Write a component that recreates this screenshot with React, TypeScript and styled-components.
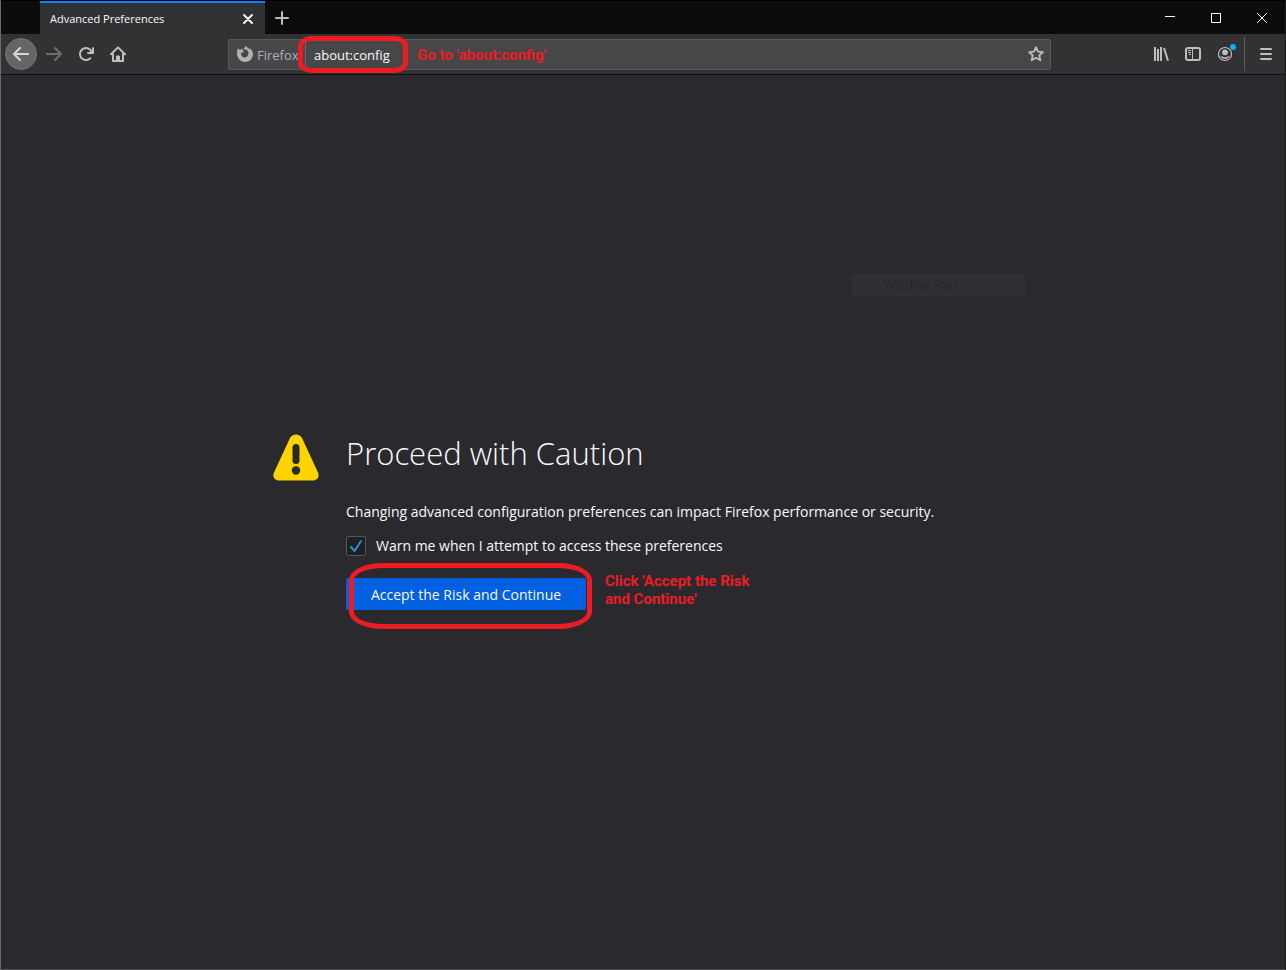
import React from 'react';
import styled, { createGlobalStyle } from 'styled-components';

const uiFont = '"Open Sans", "Noto Sans", sans-serif';

const GlobalStyle = createGlobalStyle`
  *, *::before, *::after { box-sizing: border-box; }
  html, body { margin: 0; padding: 0; background: #2a2a2e; }
  body { font-family: ${uiFont}; color: #f9f9fa; }
  button, input { font-family: inherit; }
`;

const BrowserWindow = styled.div`
  display: flex;
  flex-direction: column;
  min-height: 100vh;
  border-left: 1px solid #6a6a6c;
  border-right: 1px solid #1c1c1e;
  border-bottom: 1px solid #505053;
  background: #2a2a2e;
`;

const TitleBar = styled.header`
  display: flex;
  align-items: stretch;
  height: 34px;
  padding-left: 39px;
  border-top: 1px solid #000;
  background: #0c0c0d;
`;

const Tab = styled.div`
  display: flex;
  align-items: center;
  justify-content: space-between;
  width: 225px;
  padding: 0 8px 0 10px;
  border-top: 2px solid #0a84ff;
  background: #323234;
  font-size: 11px;
`;

const PlainButton = styled.button<{ $width: number }>`
  display: flex;
  align-items: center;
  justify-content: center;
  flex: none;
  width: ${(p) => p.$width}px;
  padding: 0;
  border: 0;
  background: transparent;
  color: #f9f9fa;
`;

const WindowControls = styled.div`
  display: flex;
  margin-left: auto;
`;

const Toolbar = styled.nav`
  display: flex;
  align-items: center;
  height: 41px;
  padding: 0 3px 0 4px;
  border-bottom: 1px solid #0c0c0d;
  background: #323234;
`;

const ToolButton = styled.button<{ $round?: boolean; $dim?: boolean }>`
  position: relative;
  display: flex;
  align-items: center;
  justify-content: center;
  flex: none;
  width: 32px;
  height: 32px;
  padding: 0;
  border: ${(p) => (p.$round ? '1px solid #737375' : '0')};
  border-radius: ${(p) => (p.$round ? '50%' : '2px')};
  background: ${(p) => (p.$round ? '#656566' : 'transparent')};
  color: ${(p) => (p.$dim ? '#6e6e70' : p.$round ? '#d8d8d9' : '#bebebf')};
`;

const BackGroup = styled.div`
  display: flex;
  margin-right: 1px;
`;

const Spacer = styled.div`
  flex: 94 1 0;
`;

const AddressBar = styled.div`
  display: flex;
  align-items: center;
  flex: 807 1 0;
  height: 31px;
  padding: 0 6px 0 8px;
  border: 1px solid #59595b;
  border-radius: 2px;
  background: #474749;
`;

const Identity = styled.span`
  display: flex;
  align-items: center;
  gap: 4px;
  flex: none;
  width: 68px;
  height: 24px;
  color: #b1b1b3;
  font-size: 13px;
  line-height: 22px;
`;

const IdentityName = styled.span`
  padding-top: 2px;
`;

const AddressField = styled.div`
  position: relative;
  flex: none;
  width: 92px;
  border-left: 1px solid #6a6a6c;
`;

const AddressInput = styled.input`
  display: block;
  width: 100%;
  height: 24px;
  padding: 2px 0 0 8px;
  border: 0;
  outline: 0;
  background: transparent;
  color: #f9f9fa;
  font-size: 13px;
`;

const Ring = styled.span<{ $inset: string; $radius: string }>`
  position: absolute;
  inset: ${(p) => p.$inset};
  border: 5px solid #ed1c24;
  border-radius: ${(p) => p.$radius};
  pointer-events: none;
`;

const Note = styled.span`
  color: #ed1c24;
  font: 700 15px/18px Roboto, sans-serif;
`;

const AddressNote = styled(Note)`
  flex: 1;
  padding: 1px 0 0 20px;
  white-space: nowrap;
`;

const Separator = styled.span`
  flex: none;
  width: 1px;
  height: 34px;
  margin: 0 5px 0 3px;
  background: #5b5b5d;
`;

const Badge = styled.span`
  position: absolute;
  top: 6px;
  right: 5px;
  width: 6px;
  height: 6px;
  border-radius: 50%;
  background: #00b3f4;
`;

const Page = styled.main`
  position: relative;
  display: flex;
  align-items: center;
  justify-content: center;
  flex: 1;
  padding: 24px;
`;

const SnipGhost = styled.div`
  position: absolute;
  top: 199px;
  right: 260px;
  width: 173px;
  height: 22px;
  padding-left: 32px;
  background: #2f3035;
  color: #26262b;
  font-size: 12px;
  line-height: 22px;
`;

const Warning = styled.section`
  display: flex;
  align-items: flex-start;
  gap: 27px;
  width: 100%;
  max-width: 740px;
`;

const WarningBody = styled.div`
  flex: 1;
`;

const Title = styled.h1`
  margin: 0;
  font-size: 31px;
  font-weight: 300;
  line-height: 38px;
`;

const Description = styled.p`
  margin: 30px 0 0;
  font-size: 14px;
  line-height: 20px;
`;

const CheckRow = styled.label`
  display: flex;
  align-items: center;
  gap: 10px;
  margin-top: 14px;
  font-size: 14px;
  line-height: 20px;
`;

const CheckHolder = styled.span`
  position: relative;
  display: flex;

  svg {
    position: absolute;
    inset: 0;
    pointer-events: none;
  }
`;

const CheckBox = styled.input`
  appearance: none;
  width: 20px;
  height: 20px;
  margin: 0;
  border: 1px solid #58585b;
  border-radius: 2px;
  background: #202023;
`;

const Actions = styled.div`
  display: flex;
  align-items: center;
  gap: 19px;
  margin-top: 22px;
`;

const AcceptHolder = styled.div`
  position: relative;
  flex: none;
`;

const AcceptButton = styled.button`
  display: block;
  width: 240px;
  height: 32px;
  padding: 0;
  border: 0;
  border-radius: 2px;
  background: #0060df;
  color: #f9f9fa;
  font-size: 14px;
`;

const AcceptNote = styled(Note)`
  width: 160px;
  margin: -8px 0 0;
  height: 36px;
`;

const Arrow = ({ flip }: { flip?: boolean }) => (
  <svg width="16" height="16" viewBox="0 0 16 16" fill="currentColor" aria-hidden="true">
    <path
      transform={flip ? 'matrix(-1 0 0 1 16 0)' : undefined}
      d="M15 7H3.414l4.293-4.293a1 1 0 0 0-1.414-1.414l-6 6a1 1 0 0 0 0 1.414l6 6a1 1 0 0 0 1.414-1.414L3.414 9H15a1 1 0 0 0 0-2z"
    />
  </svg>
);

const Reload = () => (
  <svg width="16" height="16" viewBox="0 0 16 16" fill="currentColor" aria-hidden="true">
    <path d="M15 1a1 1 0 0 0-1 1v2.418A6.995 6.995 0 1 0 8 15a6.954 6.954 0 0 0 4.950-2.050 1 1 0 0 0-1.414-1.414A5.019 5.019 0 1 1 12.549 6H10a1 1 0 0 0 0 2h5a1 1 0 0 0 1-1V2a1 1 0 0 0-1-1z" />
  </svg>
);

const Home = () => (
  <svg width="16" height="16" viewBox="0 0 16 16" fill="none" stroke="currentColor" strokeWidth="2" strokeLinecap="round" strokeLinejoin="round" aria-hidden="true">
    <path d="M1 8.200 8 1.400l7 6.800M3 8v7h10V8" />
    <path d="M7 15v-4.500h2V15" />
  </svg>
);

const FirefoxMark = () => (
  <svg width="16" height="16" viewBox="0 0 16 16" fill="currentColor" aria-hidden="true">
    <path d="M15.6 6.2C15.2 4.400 14 2.800 12.300 2c.6.8.9 1.500 1 2.100C12 2.200 10.200 1.900 9.300 0 7.700.9 6.800 2.400 6.800 3.700c.6-.2 1.200-.2 1.800-.1 1.600.4 2.900 1.800 2.900 3.900 0 2.300-1.700 3.900-3.700 3.900-2.200 0-3.800-1.600-3.800-3.500 0-.8.7-1.500 1.600-1.500.4 0 .8.1 1.100.2l.3-.7c-.2-.6-1-1.100-1.400-1.700-.4-.6-.4-1.200-.4-1.700-.7.300-1.300.8-1.700 1.300-.5-.1-.9-.1-1.300 0-.4-.4-.5-1.100-.5-1.700C.6 3.200 0 5.200 0 7.500 0 12.200 3.500 16 8 16s8-3.600 8-8c0-.6-.1-1.200-.4-1.800z" />
  </svg>
);

const Star = () => (
  <svg width="16" height="16" viewBox="0 0 16 16" fill="none" stroke="#bebebf" strokeWidth="1.800" strokeLinejoin="round" aria-hidden="true">
    <path d="m8 1.200 2 4.400 4.900.5-3.600 3.300 1 4.900L8 11.800l-4.300 2.500 1-4.900L1.100 6.100 6 5.600z" />
  </svg>
);

const Library = () => (
  <svg width="16" height="16" viewBox="0 0 16 16" fill="none" stroke="currentColor" strokeWidth="2" aria-hidden="true">
    <path d="M2 1v14M5 3v12M8 1v14M11 2l4 12.700" />
  </svg>
);

const Sidebar = () => (
  <svg width="16" height="16" viewBox="0 0 16 16" fill="none" stroke="currentColor" aria-hidden="true">
    <rect x="1" y="2" width="14" height="12" rx="2" strokeWidth="2" />
    <path d="M7.500 2v12" />
    <path d="M3 4.500h3M3 6.500h3M4 8.500h2" />
  </svg>
);

const Account = () => (
  <svg width="16" height="16" viewBox="0 0 16 16" aria-hidden="true">
    <circle cx="8" cy="8" r="6.500" fill="none" stroke="currentColor" strokeWidth="1.200" />
    <circle cx="8" cy="6.300" r="2.900" fill="currentColor" />
    <path d="M3.600 10c1 .1 1.600.4 2.300.8 1.200.7 3 .7 4.200 0 .7-.4 1.300-.7 2.300-.8-.7 1.900-2.400 3-4.400 3s-3.700-1.100-4.400-3z" fill="currentColor" />
  </svg>
);

const Menu = () => (
  <svg width="16" height="16" viewBox="0 0 16 16" stroke="currentColor" strokeWidth="2" strokeLinecap="round" aria-hidden="true">
    <path d="M3 3h10M3 8h10M3 13h10" />
  </svg>
);

const WarningSign = () => (
  <svg width="46" height="48" viewBox="0 0 46 48" aria-hidden="true">
    <path d="M23 .5c2.500 0 4.700 1.300 6 3.600l16 34.500c1.900 4-.7 7.900-5 7.900H6c-4.300 0-6.900-3.900-5-7.900L17 4.100C18.300 1.800 20.500.5 23 .5z" fill="#fdd300" />
    <rect x="19.500" y="10" width="7" height="20" rx="3.500" fill="#2a2a2e" />
    <circle cx="23" cy="36.500" r="4.200" fill="#2a2a2e" />
  </svg>
);

export default function App() {
  return (
    <>
      <GlobalStyle />
      <BrowserWindow>
        <TitleBar>
          <Tab>
            <span>Advanced Preferences</span>
            <PlainButton $width={18} aria-label="Close tab">
              <svg width="10" height="10" viewBox="0 0 10 10" stroke="currentColor" strokeWidth="1.800" strokeLinecap="round" aria-hidden="true">
                <path d="m1 1 8 8M9 1 1 9" />
              </svg>
            </PlainButton>
          </Tab>
          <PlainButton $width={34} aria-label="New tab">
            <svg width="14" height="14" viewBox="0 0 14 14" stroke="#bebebf" strokeWidth="2" strokeLinecap="round" aria-hidden="true">
              <path d="M7 1v12M1 7h12" />
            </svg>
          </PlainButton>
          <WindowControls>
            <PlainButton $width={46} aria-label="Minimize">
              <svg width="10" height="10" viewBox="0 0 10 10" stroke="#fff" aria-hidden="true">
                <path d="M0 3.500h10" />
              </svg>
            </PlainButton>
            <PlainButton $width={46} aria-label="Maximize">
              <svg width="10" height="10" viewBox="0 0 10 10" stroke="#fff" fill="none" aria-hidden="true">
                <path d="M.5.5h9v9h-9z" />
              </svg>
            </PlainButton>
            <PlainButton $width={46} aria-label="Close">
              <svg width="10" height="10" viewBox="0 0 10 10" stroke="#fff" aria-hidden="true">
                <path d="m0 0 10 10M10 0 0 10" />
              </svg>
            </PlainButton>
          </WindowControls>
        </TitleBar>
        <Toolbar>
          <BackGroup>
            <ToolButton $round aria-label="Back"><Arrow /></ToolButton>
          </BackGroup>
          <ToolButton $dim aria-label="Forward"><Arrow flip /></ToolButton>
          <ToolButton aria-label="Reload"><Reload /></ToolButton>
          <ToolButton aria-label="Home"><Home /></ToolButton>
          <Spacer />
          <AddressBar>
            <Identity><FirefoxMark /><IdentityName>Firefox</IdentityName></Identity>
            <AddressField>
              <AddressInput aria-label="Address" defaultValue="about:config" />
              <Ring $inset="-6px -11px -7px -8px" $radius="14px / 10px" />
            </AddressField>
            <AddressNote>Go to 'about:config'</AddressNote>
            <PlainButton $width={16} aria-label="Bookmark this page"><Star /></PlainButton>
          </AddressBar>
          <Spacer />
          <ToolButton aria-label="Library"><Library /></ToolButton>
          <ToolButton aria-label="Sidebars"><Sidebar /></ToolButton>
          <ToolButton aria-label="Account"><Account /><Badge /></ToolButton>
          <Separator />
          <ToolButton aria-label="Menu"><Menu /></ToolButton>
        </Toolbar>
        <Page>
          <SnipGhost>Window Snip</SnipGhost>
          <Warning>
            <WarningSign />
            <WarningBody>
              <Title>Proceed with Caution</Title>
              <Description>
                Changing advanced configuration preferences can impact Firefox performance or security.
              </Description>
              <CheckRow>
                <CheckHolder>
                  <CheckBox type="checkbox" defaultChecked />
                  <svg width="20" height="20" viewBox="0 0 20 20" fill="none" stroke="#2292d8" strokeWidth="2" strokeLinecap="round" strokeLinejoin="round" aria-hidden="true">
                    <path d="m5 11 3.500 4L15 5" />
                  </svg>
                </CheckHolder>
                Warn me when I attempt to access these preferences
              </CheckRow>
              <Actions>
                <AcceptHolder>
                  <AcceptButton>Accept the Risk and Continue</AcceptButton>
                  <Ring $inset="-15px -6px -19px 3px" $radius="34px / 17px" />
                </AcceptHolder>
                <AcceptNote>Click 'Accept the Risk and Continue'</AcceptNote>
              </Actions>
            </WarningBody>
          </Warning>
        </Page>
      </BrowserWindow>
    </>
  );
}
